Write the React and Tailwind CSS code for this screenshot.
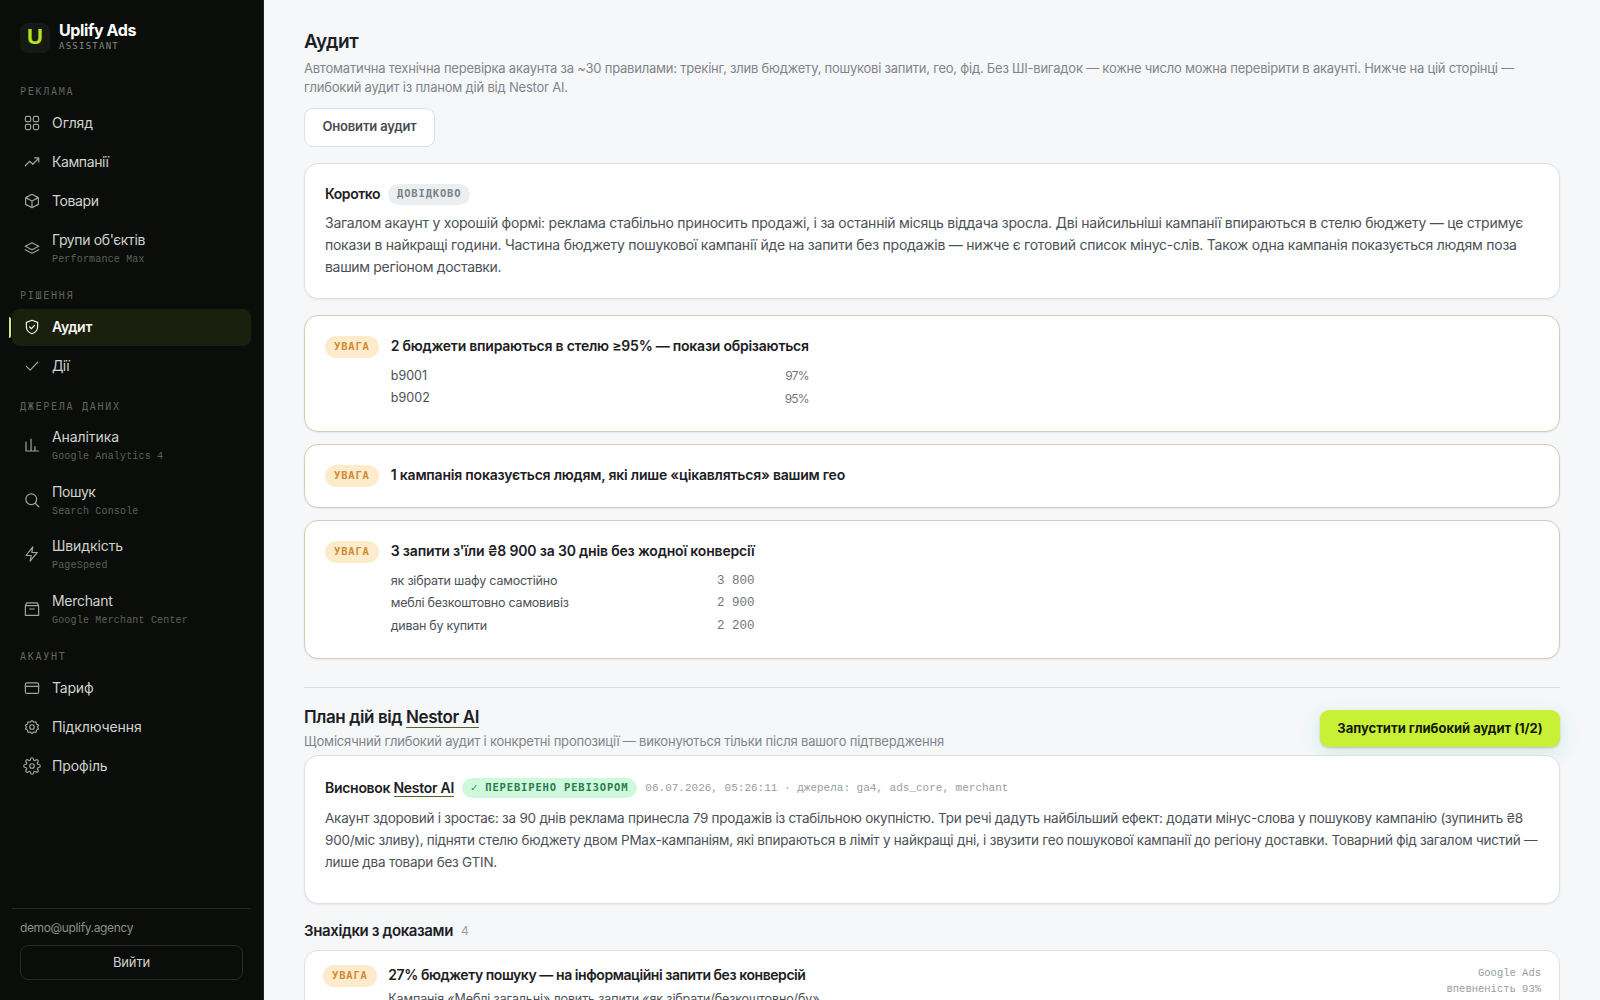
const icons = {
    grid: (
        <>
            <rect x="3.2" y="3.2" width="7" height="7" rx="2" />
            <rect x="13.8" y="3.2" width="7" height="7" rx="2" />
            <rect x="3.2" y="13.8" width="7" height="7" rx="2" />
            <rect x="13.8" y="13.8" width="7" height="7" rx="2" />
        </>
    ),
    trend: <path d="M3 17l6-6 4 4 8-8M15.5 6.5H21V12" />,
    box: <path d="M12 3l8.5 4.5v9L12 21l-8.5-4.5v-9zM3.5 7.5L12 12l8.5-4.5M12 12v9" />,
    layers: <path d="M12 5l9 4.7-9 4.7-9-4.7zM3 14.3l9 4.7 9-4.7" />,
    shield: <path d="M12 3l7.5 2.8v5.7c0 4.6-3.1 7.8-7.5 9.5-4.4-1.7-7.5-4.9-7.5-9.5V5.8zM8.8 12l2.3 2.3 4.3-4.5" />,
    check: <path d="M4.5 12.5l5 5L19.5 7" />,
    chart: <path d="M4 8v12h16.5M10.7 4v16M16 14v6" />,
    search: (
        <>
            <circle cx="11" cy="11" r="7.2" />
            <path d="M16.3 16.3L21 21" />
        </>
    ),
    zap: <path d="M13 2.5L4 14h7l-1.5 7.5L19 10h-7.2z" />,
    archive: (
        <>
            <path d="M3.2 7.5h17.6V20.5H3.2zM3.2 7.5L5 3.8h14l1.8 3.7" />
            <path d="M9 12h6" />
        </>
    ),
    card: (
        <>
            <rect x="3.2" y="5.2" width="17.6" height="14" rx="2" />
            <path d="M3.2 9.7h17.6" />
        </>
    ),
    gear: (
        <>
            <circle cx="12" cy="12" r="3" />
            <path d="M19.4 15a1.65 1.65 0 0 0 .33 1.82l.06.06a2 2 0 1 1-2.83 2.83l-.06-.06a1.65 1.65 0 0 0-2.82 1.17V21a2 2 0 0 1-4 0v-.09a1.65 1.65 0 0 0-2.9-1.18l-.06.06a2 2 0 1 1-2.83-2.83l.06-.06A1.65 1.65 0 0 0 3.09 14H3a2 2 0 0 1 0-4h.09a1.65 1.65 0 0 0 1.18-2.9l-.06-.06a2 2 0 1 1 2.83-2.83l.06.06A1.65 1.65 0 0 0 10 3.09V3a2 2 0 0 1 4 0v.09a1.65 1.65 0 0 0 2.9 1.18l.06-.06a2 2 0 1 1 2.83 2.83l-.06.06A1.65 1.65 0 0 0 20.91 10H21a2 2 0 0 1 0 4h-.09a1.65 1.65 0 0 0-1.51 1z" />
        </>
    ),
    cog: (
        <>
            <circle cx="12" cy="12" r="3" />
            <path d="M12 3.2l2.2 2.2 3.1-.4.6 3.1 2.9 1.5-1.4 2.4 1.4 2.7-2.9 1.4-.6 3-3.1-.4-2.2 2.2-2.2-2.2-3.1.4-.6-3-2.9-1.4 1.4-2.7-1.4-2.4 2.9-1.5.6-3.1 3.1.4z" />
        </>
    ),
};

const menu = [
    {
        title: 'Реклама',
        items: [
            { icon: 'grid', label: 'Огляд', track: 'tracking-[-0.08px]' },
            { icon: 'trend', label: 'Кампанії', track: 'tracking-[-0.4px]' },
            { icon: 'box', label: 'Товари', track: 'tracking-[-0.4px]' },
            { icon: 'layers', label: "Групи об'єктів", sub: 'Performance Max', track: 'tracking-[-0.37px]' },
        ],
    },
    {
        title: 'Рішення',
        items: [
            { icon: 'shield', label: 'Аудит', active: true, track: 'tracking-[-0.3px]' },
            { icon: 'check', label: 'Дії', track: 'tracking-[-0.6px]' },
        ],
    },
    {
        title: 'Джерела даних',
        items: [
            { icon: 'chart', label: 'Аналітика', sub: 'Google Analytics 4', track: 'tracking-[-0.08px]' },
            { icon: 'search', label: 'Пошук', sub: 'Search Console', track: 'tracking-[-0.4px]' },
            { icon: 'zap', label: 'Швидкість', sub: 'PageSpeed', track: 'tracking-[-0.1px]' },
            { icon: 'archive', label: 'Merchant', sub: 'Google Merchant Center', track: 'tracking-[-0.3px]' },
        ],
    },
    {
        title: 'Акаунт',
        items: [
            { icon: 'card', label: 'Тариф', track: 'tracking-[-0.2px]' },
            { icon: 'cog', label: 'Підключення', track: 'tracking-[-0.1px]' },
            { icon: 'gear', label: 'Профіль', track: 'tracking-[-0.1px]' },
        ],
    },
];

const warnings = [
    {
        title: '2 бюджети впираються в стелю ≥95% — покази обрізаються',
        track: 'tracking-[-0.235px]',
        height: 'h-[117px]',
        valueFont: 'text-[12px] tracking-[-0.8px]',
        rows: [
            ['b9001', '97%', 'tracking-[0px]'],
            ['b9002', '95%', 'tracking-[0.1px]'],
        ],
    },
    {
        title: '1 кампанія показується людям, які лише «цікавляться» вашим гео',
        track: 'tracking-[-0.21px]',
        height: 'h-[64px]',
        rows: [],
    },
    {
        title: "3 запити з'їли ₴8 900 за 30 днів без жодної конверсії",
        track: 'tracking-[-0.17px]',
        height: 'h-[139px]',
        valueFont: "font-['Liberation_Mono',monospace] text-[12.5px]",
        rows: [
            ['як зібрати шафу самостійно', '3 800', 'tracking-[-0.2px]'],
            ['меблі безкоштовно самовивіз', '2 900', 'tracking-[-0.22px]'],
            ['диван бу купити', '2 200', 'tracking-[-0.27px]'],
        ],
    },
];

function Icon({ name, className }) {
    return (
        <svg viewBox="0 0 24 24" fill="none" stroke="currentColor" strokeWidth="1.6" strokeLinecap="round" strokeLinejoin="round" className={`size-[18px] shrink-0 ${className}`}>
            {icons[name]}
        </svg>
    );
}

function NavItem({ item }) {
    return (
        <a className={`relative flex items-center gap-[11px] rounded-lg px-[11px] ${item.sub ? 'h-[52.5px]' : 'h-[37px]'} ${item.active ? 'bg-[#1b1f0e] font-semibold text-[#f6f8f1]' : 'text-[#cfd3ca]'}`}>
            {item.active && <span className="absolute top-2 -left-[3px] h-[21px] w-[2px] rounded-r bg-[#c8ee8a]" />}
            <Icon name={item.icon} className={item.active ? 'text-[#f0f3ea]' : 'text-[#a0a49b]'} />
            <span className={`flex flex-col ${item.sub ? 'pt-[2px]' : ''}`}>
                <span className={`text-sm leading-5 ${item.track}`}>{item.label}</span>
                {item.sub && <span className="mt-[2px] font-['Liberation_Mono',monospace] text-[10px] leading-4 tracking-[0.18px] text-[#5d6159]">{item.sub}</span>}
            </span>
        </a>
    );
}

function Sidebar() {
    return (
        <aside className="flex h-full w-[264px] shrink-0 flex-col border-r border-[#22251f] bg-[#0b0d0a] px-3">
            <div className="flex h-[83px] items-start gap-[9px] pt-[22px] pl-2">
                <div className="mt-px flex size-[30px] items-center justify-center rounded-lg bg-[#161914] pb-[2px] font-['Liberation_Sans',sans-serif] text-[22px] leading-none font-bold text-[#b5e61d]">U</div>
                <div>
                    <div className="-mt-[2px] text-base leading-5 font-bold tracking-[-0.39px] text-white">Uplify Ads</div>
                    <div className="font-['DejaVu_Sans_Mono',monospace] text-[9px] leading-[13px] tracking-[1.25px] text-[#868a81]">ASSISTANT</div>
                </div>
            </div>
            <nav className="flex flex-col">
                {menu.map((group, index) => (
                    <div key={group.title}>
                        <div className={`pl-2 font-['DejaVu_Sans_Mono',monospace] text-[10px] leading-[15px] tracking-[1.72px] text-[#60645c] uppercase ${index === 0 ? 'h-[21.5px] pt-px' : 'h-[34.5px] pt-[14px]'}`}>{group.title}</div>
                        <div className="flex flex-col gap-[2px]">
                            {group.items.map((item) => (
                                <NavItem key={item.label} item={item} />
                            ))}
                        </div>
                    </div>
                ))}
            </nav>
            <div className="mt-auto h-[92px] border-t border-[#262923] px-2 pt-[10px]">
                <div className="text-xs leading-[18px] tracking-[-0.36px] text-[#8c9087]">demo@uplify.agency</div>
                <button className="mt-2 h-[35px] w-full rounded-lg border border-[#282b25] text-[13px] tracking-[-0.16px] text-[#cfd3ca]">Вийти</button>
            </div>
        </aside>
    );
}

function Pill({ children, className }) {
    return (
        <span className={`inline-flex shrink-0 items-center rounded-full px-[9px] font-['DejaVu_Sans_Mono',monospace] text-[10.5px] font-bold tracking-[0.83px] whitespace-nowrap uppercase ${className}`}>
            {children}
        </span>
    );
}

function Warning({ card }) {
    return (
        <div className={`flex items-start gap-3 rounded-[14px] border border-[#d9c9b5] bg-white px-5 pt-5 shadow-[0_1px_2px_rgba(16,24,40,0.06)] ${card.height}`}>
            <Pill className="h-[22px] bg-[#fdebcb] text-[#d38a33]">Увага</Pill>
            <div>
                <div className={`text-sm leading-5 font-semibold whitespace-nowrap text-[#1c2024] ${card.track}`}>{card.title}</div>
                <div className="mt-[9.5px] flex flex-col">
                    {card.rows.map(([name, value, track]) => (
                        <div key={name} className="flex h-[22.5px] items-center justify-between">
                            <span className={`text-[12.5px] text-[#4c5157] ${track}`}>{name}</span>
                            <span className={`text-[#72777c] ${card.valueFont}`}>{value}</span>
                        </div>
                    ))}
                </div>
            </div>
        </div>
    );
}

function Nestor() {
    return <span className="border-b border-[#5a6420]">Nestor AI</span>;
}

export default function App() {
    return (
        <div className="flex h-screen w-full overflow-hidden bg-[#f5f7f9] font-['Inter','Liberation_Sans',sans-serif] text-[#1c2024]">
            <Sidebar />
            <main className="flex h-full min-w-0 flex-1 flex-col overflow-hidden px-10 *:shrink-0">
                <h1 className="mt-[28.5px] text-[19px] leading-[26px] font-semibold tracking-[-0.45px]">Аудит</h1>
                <p className="mt-[4.5px] text-[13px] leading-[19px] whitespace-nowrap text-[#7f858b]">
                    <span className="block tracking-[-0.223px]">Автоматична технічна перевірка акаунта за ~30 правилами: трекінг, злив бюджету, пошукові запити, гео, фід. Без ШІ-вигадок — кожне число можна перевірити в акаунті. Нижче на цій сторінці —</span>
                    <span className="block tracking-[-0.2px]">глибокий аудит із планом дій від Nestor AI.</span>
                </p>
                <button className="mt-[11px] h-[38.5px] w-[131px] rounded-[9px] border border-[#dde1e5] bg-white pb-[2px] text-[13px] font-semibold tracking-[-0.17px] text-[#464b50]">Оновити аудит</button>

                <section className="mt-4 h-[136px] rounded-[14px] border border-[#dce1e6] bg-white px-5 pt-5 shadow-[0_1px_2px_rgba(16,24,40,0.06)]">
                    <div className="flex items-center gap-2">
                        <h2 className="text-sm leading-5 font-semibold tracking-[-0.47px]">Коротко</h2>
                        <Pill className="h-[21px] bg-[#eceff2] text-[#7c8287]">Довідково</Pill>
                    </div>
                    <p className="mt-[7px] text-sm leading-[22px] whitespace-nowrap text-[#4c5157]">
                        <span className="block tracking-[-0.255px]">Загалом акаунт у хорошій формі: реклама стабільно приносить продажі, і за останній місяць віддача зросла. Дві найсильніші кампанії впираються в стелю бюджету — це стримує</span>
                        <span className="block tracking-[-0.254px]">покази в найкращі години. Частина бюджету пошукової кампанії йде на запити без продажів — нижче є готовий список мінус-слів. Також одна кампанія показується людям поза</span>
                        <span className="block tracking-[-0.32px]">вашим регіоном доставки.</span>
                    </p>
                </section>

                <div className="mt-4 flex flex-col gap-3">
                    {warnings.map((card) => (
                        <Warning key={card.title} card={card} />
                    ))}
                </div>

                <div className="mt-7 flex h-[68.5px] items-start justify-between border-t border-[#dde1e4]">
                    <div className="pt-[16px]">
                        <h2 className="text-[17px] leading-[26px] font-semibold tracking-[-0.395px]">План дій від <Nestor /></h2>
                        <p className="mt-[2px] text-[13px] leading-[19px] tracking-[-0.183px] text-[#7f858b]">Щомісячний глибокий аудит і конкретні пропозиції — виконуються тільки після вашого підтвердження</p>
                    </div>
                    <button className="mt-[22px] h-[37.5px] w-[240px] rounded-[9px] bg-[#c8f135] text-[13px] font-bold tracking-[-0.02px] text-[#14180a] shadow-[0_1px_2px_rgba(16,24,40,0.2),0_6px_20px_rgba(40,160,120,0.16)]">Запустити глибокий аудит (1/2)</button>
                </div>

                <section className="h-[148.5px] rounded-[14px] border border-[#dce1e6] bg-white px-5 pt-[22px] shadow-[0_1px_2px_rgba(16,24,40,0.06)]">
                    <div className="flex items-center gap-2">
                        <h3 className="text-sm leading-5 font-semibold tracking-[-0.287px]">Висновок <Nestor /></h3>
                        <Pill className="h-[20px] bg-[#cff9dc] text-[#2a7b50]">✓ Перевірено ревізором</Pill>
                        <span className="font-['Liberation_Mono',monospace] text-[11px] text-[#979ca1]">06.07.2026, 05:26:11 · джерела: ga4, ads_core, merchant</span>
                    </div>
                    <p className="mt-[9px] text-[13.5px] leading-[22px] whitespace-nowrap text-[#4c5157]">
                        <span className="block tracking-[-0.243px]">Акаунт здоровий і зростає: за 90 днів реклама принесла 79 продажів із стабільною окупністю. Три речі дадуть найбільший ефект: додати мінус-слова у пошукову кампанію (зупинить ₴8</span>
                        <span className="block tracking-[-0.24px]">900/міс зливу), підняти стелю бюджету двом PMax-кампаніям, які впираються в ліміт у найкращі дні, і звузити гео пошукової кампанії до регіону доставки. Товарний фід загалом чистий —</span>
                        <span className="block tracking-[-0.233px]">лише два товари без GTIN.</span>
                    </p>
                </section>

                <div className="mt-4 flex items-center gap-2">
                    <h2 className="text-[15px] leading-[22px] font-semibold tracking-[-0.374px]">Знахідки з доказами</h2>
                    <span className="text-xs text-[#9a9fa4]">4</span>
                </div>

                <section className="mt-2 flex h-[120px] items-start rounded-[14px] border border-[#dce1e6] bg-white px-[18px] pt-[14px]">
                    <Pill className="h-[22px] bg-[#fdebcb] text-[#d38a33]">Увага</Pill>
                    <div className="ml-[11.5px]">
                        <h3 className="text-sm leading-5 font-semibold tracking-[-0.44px]">27% бюджету пошуку — на інформаційні запити без конверсій</h3>
                        <p className="mt-[4px] text-[12.5px] leading-[19px] tracking-[-0.12px] text-[#4c5157]">Кампанія «Меблі загальні» ловить запити «як зібрати/безкоштовно/бу»</p>
                    </div>
                    <div className="ml-auto text-right font-['Liberation_Mono',monospace] text-[10.5px] leading-4 text-[#979ca1]">
                        <div>Google Ads</div>
                        <div>впевненість 93%</div>
                    </div>
                </section>
            </main>
        </div>
    );
}
